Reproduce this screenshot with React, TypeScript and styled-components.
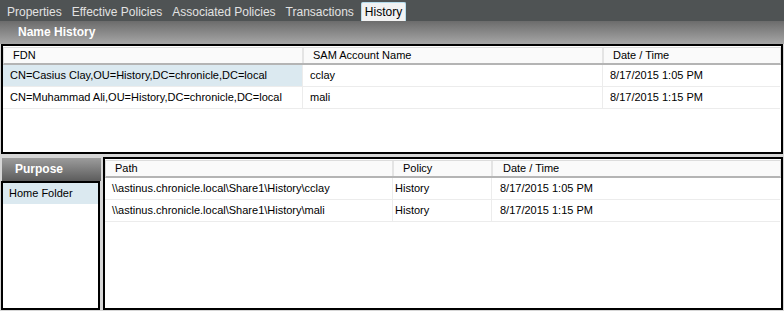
import React from 'react'
import styled, { createGlobalStyle, css } from 'styled-components'

const GlobalStyle = createGlobalStyle`
  html, body {
    margin: 0;
    padding: 0;
    background: #d6d6d6;
  }
  body {
    font-family: Tahoma, "Liberation Sans", Arial, sans-serif;
    font-size: 11px;
    color: #000;
  }
`

const tabs = ['Properties', 'Effective Policies', 'Associated Policies', 'Transactions', 'History']

const nameHistory = [
  { fdn: 'CN=Casius Clay,OU=History,DC=chronicle,DC=local', sam: 'cclay', date: '8/17/2015 1:05 PM' },
  { fdn: 'CN=Muhammad Ali,OU=History,DC=chronicle,DC=local', sam: 'mali', date: '8/17/2015 1:15 PM' },
]

const folders = [
  { path: '\\\\astinus.chronicle.local\\Share1\\History\\cclay', policy: 'History', date: '8/17/2015 1:05 PM' },
  { path: '\\\\astinus.chronicle.local\\Share1\\History\\mali', policy: 'History', date: '8/17/2015 1:15 PM' },
]

export default function App() {
  return <>
    <GlobalStyle />
    <Screen>
      <TabBar>
        {tabs.map(t => <Tab key={t} $active={t === 'History'}>{t}</Tab>)}
      </TabBar>

      <SectionHeader $flip={false} $indent={18}>Name History</SectionHeader>
      <Box $grow={false} $height={110}>
        <HeaderRow $cols='300px 300px 1fr'>
          <HeadCell>FDN</HeadCell>
          <HeadCell>SAM Account Name</HeadCell>
          <HeadCell $last>Date / Time</HeadCell>
        </HeaderRow>
        {nameHistory.map((r, i) => (
          <Row key={r.sam} $cols='300px 300px 1fr'>
            <Cell $selected={i === 0}>{r.fdn}</Cell>
            <Cell>{r.sam}</Cell>
            <Cell $last>{r.date}</Cell>
          </Row>
        ))}
      </Box>

      <Lower>
        <Side>
          <SectionHeader $flip $indent={13}>Purpose</SectionHeader>
          <Box $grow>
            <ListItem $selected>Home Folder</ListItem>
          </Box>
        </Side>
        <Box $grow>
          <HeaderRow $cols='288px 99px 1fr'>
            <HeadCell>Path</HeadCell>
            <HeadCell $pad={9}>Policy</HeadCell>
            <HeadCell $last $pad={10}>Date / Time</HeadCell>
          </HeaderRow>
          {folders.map(r => (
            <Row key={r.path} $cols='288px 99px 1fr'>
              <Cell>{r.path}</Cell>
              <Cell $pad={2}>{r.policy}</Cell>
              <Cell $last $pad={8}>{r.date}</Cell>
            </Row>
          ))}
        </Box>
      </Lower>
    </Screen>
  </>
}

const Screen = styled.div`
  width: 784px;
  height: 311px;
  display: flex;
  flex-direction: column;
  overflow: hidden;
`

const TabBar = styled.div`
  height: 21px;
  background: #4f5354;
  display: flex;
  align-items: flex-end;
  padding-left: 2px;
  flex-shrink: 0;
`

const Tab = styled.div<{ $active: boolean }>`
  height: 19px;
  line-height: 20px;
  padding: 0 5px;
  font-size: 12px;
  color: #e2e2e2;
  box-sizing: border-box;

  ${p => p.$active && css`
    margin-left: 2px;
    padding: 0 3px;
    color: #000;
    background: #f2f2f2;
    border: 1px solid #b6dcec;
    border-bottom: none;
    border-radius: 2px 2px 0 0;
    line-height: 19px;
  `}
`

const SectionHeader = styled.div<{ $flip: boolean, $indent: number }>`
  height: 23px;
  line-height: 23px;
  flex-shrink: 0;
  padding-left: ${p => p.$indent}px;
  font-size: 12px;
  font-weight: bold;
  color: #fff;
  background: ${p => p.$flip
    ? 'linear-gradient(#9c9c9c, #5c5c5c)'
    : 'linear-gradient(#6c6c6c, #a6a6a6)'};
`

const Box = styled.div<{ $grow: boolean, $height?: number }>`
  margin: 0 1px;
  background: #fff;
  border: 2px solid #000;
  box-sizing: border-box;
  display: flex;
  flex-direction: column;
  ${p => p.$grow ? css`flex: 1;` : css`height: ${p.$height}px; flex-shrink: 0;`}
`

const HeaderRow = styled.div<{ $cols: string }>`
  display: grid;
  grid-template-columns: ${p => p.$cols};
  height: 18px;
  box-sizing: border-box;
  background: #fafafa;
  border: 1px solid #dcdcdc;
  border-bottom: 2px solid #b4b4b4;
  margin-top: 1px;
`

const HeadCell = styled.div<{ $last?: boolean, $pad?: number }>`
  padding-left: ${p => p.$pad ?? 9}px;
  line-height: 15px;
  white-space: nowrap;
  overflow: hidden;
  ${p => !p.$last && css`border-right: 2px solid #e4e4e4;`}
`

const Row = styled.div<{ $cols: string }>`
  display: grid;
  grid-template-columns: ${p => p.$cols};
  height: 21px;
  border-bottom: 1px solid #ececec;
  margin-right: 1px;
`

const Cell = styled.div<{ $selected?: boolean, $last?: boolean, $pad?: number }>`
  padding-left: ${p => p.$pad ?? 7}px;
  line-height: 21px;
  white-space: nowrap;
  overflow: hidden;
  ${p => !p.$last && css`border-right: 1px solid #ececec;`}
  ${p => p.$selected && css`background: #dbe9f0;`}
`

const Lower = styled.div`
  flex: 1;
  display: flex;
  gap: 1px;
  margin-top: 3px;
  padding-bottom: 1px;
`

const Side = styled.div`
  width: 101px;
  display: flex;
  flex-direction: column;
  padding-top: 1px;

  ${SectionHeader} {
    margin-left: 2px;
  }
`

const ListItem = styled.div<{ $selected: boolean }>`
  height: 21px;
  line-height: 21px;
  padding-left: 6px;
  ${p => p.$selected && css`background: #dbe9f0;`}
`
